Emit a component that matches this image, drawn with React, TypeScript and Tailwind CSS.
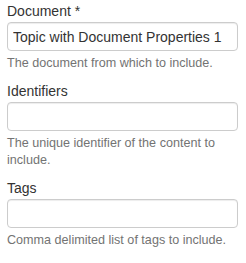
export default function App() {
  const font = { fontFamily: '"Liberation Sans", Arial, sans-serif' };
  return (
    <div className="w-[246px] h-[263px] bg-white pl-[7px] pt-[1px]" style={font}>
      <div className="w-[231px]">
        <Field label="Document *" value="Topic with Document Properties 1" help="The document from which to include." />
        <Field label="Identifiers" value="" help="The unique identifier of the content to include." />
        <Field label="Tags" value="" help="Comma delimited list of tags to include." />
      </div>
    </div>
  );
}

function Field({ label, value, help }: { label: string; value: string; help: string }) {
  return (
    <div className="mb-[9px]">
      <label className="block text-[14px] leading-[20px] text-[#333] mb-[1px]">{label}</label>
      <input
        readOnly
        value={value}
        className="block w-full h-[29px] px-[5px] border border-[#ccc] rounded-[4px] text-[14px] text-[#333] shadow-[inset_0_1px_1px_rgba(0,0,0,0.075)] outline-none bg-white"
      />
      <p className="mt-[4px] text-[12.6px] leading-[17px] text-[#737373]">{help}</p>
    </div>
  );
}
